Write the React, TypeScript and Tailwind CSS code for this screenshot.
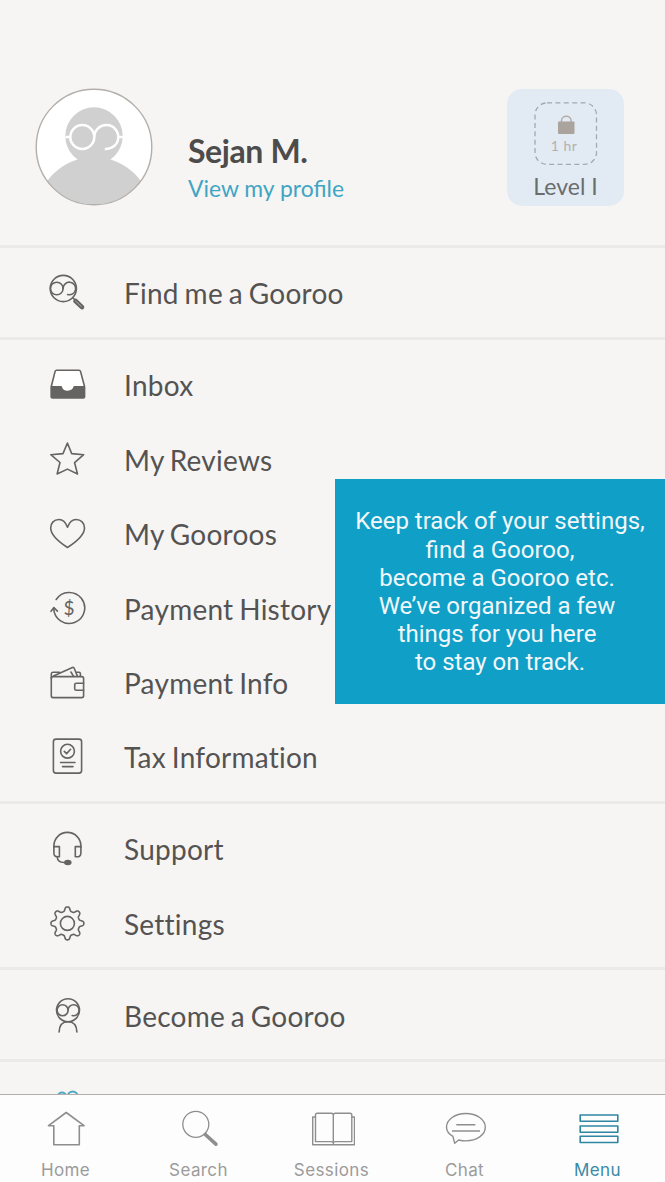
import type { ReactNode } from "react";

function gearPath(cx: number, cy: number) {
  const pts: string[] = [];
  for (let i = 0; i < 240; i++) {
    const a = (i / 240) * Math.PI * 2;
    const r = 14.5 + (2.1 * Math.tanh(1.6 * Math.cos(8 * a) - 0.3)) / Math.tanh(1.6);
    pts.push(`${(cx + r * Math.cos(a)).toFixed(2)} ${(cy + r * Math.sin(a)).toFixed(2)}`);
  }
  return `M${pts.join("L")}Z`;
}

function Glyph({ children, className = "text-[#656462]" }: { children: ReactNode; className?: string }) {
  return (
    <svg
      viewBox="0 0 40 40"
      className={`h-10 w-10 shrink-0 ${className}`}
      fill="none"
      stroke="currentColor"
      strokeWidth="1.6"
      strokeLinecap="round"
      strokeLinejoin="round"
    >
      {children}
    </svg>
  );
}

const FindIcon = (
  <Glyph>
    <circle cx="16.3" cy="16.5" r="13.1" />
    <circle cx="9.8" cy="16.5" r="6.3" />
    <path d="M16.1 16.5A6.300 6.300 0 1 1 20.600 22.500" />
    <path d="M28.5 29l6.500 6.100" strokeWidth="4.600" />
    <path d="M28.500 29l5.700 5.300" stroke="#b5b4b2" strokeWidth="0.900" />
    <path d="M25.800 25.800l2 2" />
  </Glyph>
);

const InboxIcon = (
  <Glyph>
    <path d="M9.600 6.200h22.400c.8 0 1.300.4 1.500 1.200L37.400 22v11.200H4.400V22L8.100 7.400c.2-.8.7-1.200 1.500-1.200z" fill="#fff" />
    <path
      d="M4.400 22.800h9.800c.6 3.100 3 4.700 6.500 4.700s5.900-1.600 6.600-4.700h10.100v10.300c0 .6-.3.900-.9.900H5.300c-.6 0-.9-.3-.9-.9z"
      fill="currentColor"
    />
  </Glyph>
);

const StarIcon = (
  <Glyph>
    <path d="M20.400 4l4.300 10.600 12 1.100-9.100 8 2.900 11.300-10.100-4.900-10.300 4.900 2.900-11.500-9.200-7.800 12.200-1.100z" />
  </Glyph>
);

const HeartIcon = (
  <Glyph>
    <path d="M20.500 14.200C18.700 9.500 16 6.500 12 6.500 7 6.500 3.700 10 3.700 15c0 7.500 8.300 14 16.800 19.500C29 29 37.500 22.500 37.500 15c0-5-3.500-8.500-8.400-8.500-4.100 0-6.800 3-8.600 7.700z" />
  </Glyph>
);

const HistoryIcon = (
  <Glyph>
    <path d="M9.200 11.500A15.500 15.500 0 1 1 6.700 20.500" />
    <path d="M4 23.300l2.900-3.700 3.500 3.500" />
    <text
      x="22"
      y="26.800"
      textAnchor="middle"
      fontFamily="Lato, sans-serif"
      fontSize="19"
      fill="currentColor"
      stroke="none"
    >
      $
    </text>
  </Glyph>
);

const WalletIcon = (
  <Glyph>
    <rect x="4.300" y="14.600" width="32.300" height="21" rx="1.800" />
    <path d="M36.600 21.200h-7.300c-1 0-1.600.6-1.600 1.500v4c0 .9.600 1.500 1.600 1.500h7.300" />
    <path d="M4.300 16.500v-4.600c0-1.100.6-1.700 1.600-1.700h6.600" />
    <path d="M6.500 13.900L25.400 5.600c.9-.4 1.500-.1 1.800.7l3.200 7.800M24 10l2.500 4.400M30 10.200h2c.9 0 1.400.6 1.400 1.500v2.800" />
  </Glyph>
);

const TaxIcon = (
  <Glyph>
    <rect x="6.400" y="3.100" width="28.200" height="34" rx="2.600" />
    <circle cx="20.500" cy="15.200" r="6.900" />
    <path d="M17.300 15.400l2.300 2.200 4-4.300M13.500 26.500h14.500M15.500 30.600h10.500" />
  </Glyph>
);

const SupportIcon = (
  <Glyph>
    <path d="M6.900 19.300v-1.500a13.500 13.400 0 0 1 27 0v1.500" />
    <path d="M6.900 18.600h5.500v10.200h-1.600c-2.600 0-3.900-1.300-3.900-3.900zM33.900 18.600h-5.600v10.200h1.600c2.600 0 4-1.300 4-3.900zM10.100 28.800c.3 3.800 2.400 5.700 7 5.700" />
    <ellipse cx="20.800" cy="34.500" rx="3" ry="1.900" fill="currentColor" />
  </Glyph>
);

const SettingsIcon = (
  <Glyph>
    <path d={gearPath(20.4, 20.4)} />
    <circle cx="20.400" cy="20.400" r="7" />
  </Glyph>
);

const BecomeIcon = (
  <Glyph>
    <circle cx="21" cy="15.200" r="11.500" />
    <circle cx="15.600" cy="15.200" r="5.500" />
    <path d="M21.100 15.200A5.500 5.500 0 1 1 25.200 20.500" />
    <path d="M12.100 37c.2-6.500 3.100-10.200 8.900-10.200s8.700 3.700 8.900 10.200" />
  </Glyph>
);

const BlueIcon = (
  <Glyph className="text-[#4fa9c4]">
    <circle cx="15" cy="9.200" r="3.800" strokeWidth="2" />
    <circle cx="25.700" cy="9.400" r="4.900" strokeWidth="2" />
  </Glyph>
);

function Section({ children, last = false }: { children?: ReactNode; last?: boolean }) {
  return (
    <ul className={`py-[7.300px] ${last ? "" : "border-b-[3px] border-[#ebeae9]"}`}>{children}</ul>
  );
}

function Item({ icon, label }: { icon: ReactNode; label?: string }) {
  return (
    <li className="flex h-[74.400px] items-center pl-[47px]">
      {icon}
      <span className="ml-[37px] pt-[2px] text-[28px] leading-8 tracking-[0.25px] whitespace-nowrap [word-spacing:-1.6px]">
        {label}
      </span>
    </li>
  );
}

function Tab({ label, children, active = false }: { label: string; children: ReactNode; active?: boolean }) {
  return (
    <div className={`flex w-[133px] shrink-0 flex-col items-center pt-[11px] ${active ? "text-[#2f86a2]" : "text-[#8e8e8e]"}`}>
      <svg viewBox="0 0 44 44" className="h-11 w-11" fill="none" stroke="currentColor" strokeWidth="1.600" strokeLinejoin="round">
        {children}
      </svg>
      <span
        className={`mt-[8px] mr-[2px] font-[Inter,sans-serif] text-[17px] leading-6 tracking-[0.4px] ${active ? "text-[#3a8aa6]" : "text-[#9b9b9b]"}`}
      >
        {label}
      </span>
    </div>
  );
}

function Header() {
  return (
    <header className="flex h-[248px] items-start border-b-[3px] border-[#ebeae9] pt-[88px] pl-[35px]">
      <svg viewBox="0 0 118 118" className="h-[118px] w-[118px] shrink-0">
        <defs>
          <clipPath id="avatar">
            <circle cx="59" cy="59" r="57.500" />
          </clipPath>
        </defs>
        <circle cx="59" cy="59" r="57.500" fill="#fff" />
        <g clipPath="url(#avatar)" fill="#d0d0d0">
          <circle cx="59" cy="48" r="28.700" />
          <circle cx="59" cy="126.500" r="57.500" />
        </g>
        <g fill="none" stroke="#fff" strokeWidth="2.500">
          <circle cx="47.300" cy="49" r="12" />
          <path d="M59.300 49A12 12 0 1 1 69.800 60.900M30.500 49h5M83.200 49h5" />
        </g>
        <circle cx="59" cy="59" r="57.800" fill="none" stroke="#b3aea9" strokeWidth="1.400" />
      </svg>
      <div className="mt-[43px] ml-[35px] w-[319px]">
        <h1 className="text-[32px] leading-[40px] font-bold tracking-[-0.4px] text-[#4d4c4b]">Sejan M.</h1>
        <a className="block text-[22.900px] leading-[34px] text-[#3fa5c3]">View my profile</a>
      </div>
      <div className="mt-[0.500px] flex h-[117px] w-[117px] shrink-0 flex-col items-center rounded-[15px] bg-[#e2ebf3] pt-[13px]">
        <svg viewBox="0 0 64 64" className="h-16 w-16 shrink-0">
          <rect x="1" y="0.900" width="61.500" height="61.500" rx="12" fill="none" stroke="#a3a8b2" strokeWidth="1.300" strokeDasharray="5 3.400" />
          <path d="M27.500 20v-1.500a4.800 4.300 0 0 1 9.600 0V20" fill="none" stroke="#b3aca7" strokeWidth="1.500" />
          <rect x="24" y="19.500" width="16.500" height="12.400" rx="0.800" fill="#aba39d" />
          <text x="30" y="49" textAnchor="middle" fontFamily="Lato, sans-serif" fontSize="14" letterSpacing="0.500" fill="#b3b0ae">
            1 hr
          </text>
        </svg>
        <span className="mt-[5.500px] text-[23px] leading-[30px] text-[#6a6c6e]">Level I</span>
      </div>
    </header>
  );
}

export default function App() {
  return (
    <div className="relative flex h-[1182px] w-[665px] flex-col overflow-hidden bg-[#f6f5f4] font-[Lato,sans-serif] text-[#545352]">
      <main className="min-h-0 flex-1 overflow-hidden">
        <Header />
        <Section>
          <Item icon={FindIcon} label="Find me a Gooroo" />
        </Section>
        <Section>
          <Item icon={InboxIcon} label="Inbox" />
          <Item icon={StarIcon} label="My Reviews" />
          <Item icon={HeartIcon} label="My Gooroos" />
          <Item icon={HistoryIcon} label="Payment History" />
          <Item icon={WalletIcon} label="Payment Info" />
          <Item icon={TaxIcon} label="Tax Information" />
        </Section>
        <Section>
          <Item icon={SupportIcon} label="Support" />
          <Item icon={SettingsIcon} label="Settings" />
        </Section>
        <Section>
          <Item icon={BecomeIcon} label="Become a Gooroo" />
        </Section>
        <Section last>
          <Item icon={BlueIcon} />
        </Section>
      </main>

      <nav className="flex h-[88px] shrink-0 border-t border-[#b3afac] bg-[#fdfdfd]">
        <Tab label="Home">
          <path d="M21.200 6.500L39 19.700h-4.700v19H8.800v-19H3.500z" />
        </Tab>
        <Tab label="Search">
          <circle cx="17.800" cy="18.300" r="13" strokeWidth="1.300" />
          <path d="M27.300 28.500l10.600 9.700" strokeWidth="3.600" strokeLinecap="round" />
        </Tab>
        <Tab label="Sessions">
          <path d="M22.300 9.300c0-1.300-.7-2-2-2H6.300c-1.200 0-1.800.6-1.800 1.800v26.500h15.800c1.300 0 2 .6 2 2 0-1.400.7-2 2-2h16.500V9.100c0-1.200-.6-1.800-1.800-1.800H24.300c-1.300 0-2 .7-2 2zv28" strokeWidth="1.400" />
          <path d="M4.500 11H1.700v27.800h41.800V11h-2.700" strokeWidth="1.400" />
        </Tab>
        <Tab label="Chat">
          <path d="M10.700 37.200l-1.800-6.800C5 28 2.500 24.900 2.500 21.200 2.500 13.500 11 7.500 21.900 7.500s19.400 6 19.400 13.700-8.500 13.700-19.400 13.700c-2.600 0-5-.3-7.200-.9z" strokeWidth="1.400" />
          <path d="M12.300 18.700h19M8 25h28" strokeWidth="1.400" />
        </Tab>
        <Tab label="Menu" active>
          <path d="M3.200 9h37.600v6.200H3.200zM3.200 20h37.600v6.200H3.200zM3.200 30.300h37.600v6.200H3.200z" />
        </Tab>
      </nav>

      <aside className="absolute top-[479px] right-0 h-[225px] w-[330px] bg-[#109fc6] pt-[28.300px] text-center font-[Roboto,sans-serif] text-[24px] leading-[28.200px] whitespace-pre text-[#f1f7fa]">
        {"Keep track of your settings,\nfind a Gooroo,\nbecome a Gooroo etc. \nWe’ve organized a few \nthings for you here \nto stay on track."}
      </aside>
    </div>
  );
}
